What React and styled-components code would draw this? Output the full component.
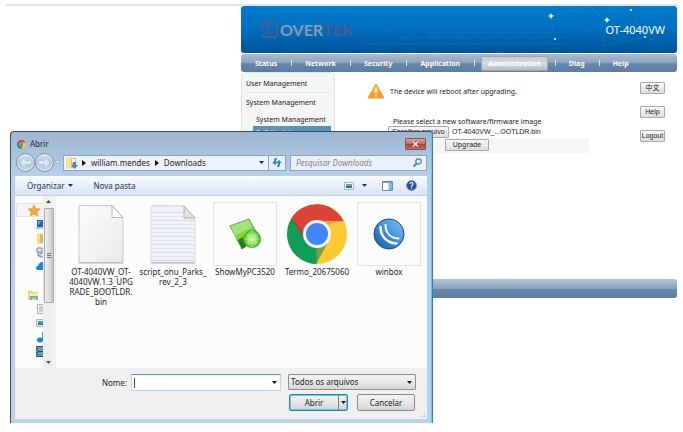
import React from "react";
import styled, { createGlobalStyle } from "styled-components";

const GlobalStyle = createGlobalStyle`
  * { box-sizing: border-box; }
  html, body { margin: 0; background: #fff; }
  button, input, select { font: inherit; color: inherit; margin: 0; }
  ul { list-style: none; margin: 0; padding: 0; }
  svg { display: block; flex: none; }
`;

/* ---------- router page ---------- */

const Page = styled.div`
  position: relative;
  padding: 4px 6px 0;
  min-height: 424px;
  font-family: "Noto Sans", Verdana, sans-serif;
  font-size: 7px;
  line-height: 9px;
  color: #222;
`;

const RouterPage = styled.div`
  border-top: 2px solid #e4e4e4;
  padding-left: 235px;
`;

const Banner = styled.header`
  position: relative;
  display: flex;
  align-items: center;
  justify-content: space-between;
  height: 47px;
  padding: 0 12px 0 20px;
  border-radius: 3px;
  overflow: hidden;
  background: linear-gradient(#007bcd, #0070c2 45%, #00539a);
`;

const Network = styled.svg`
  position: absolute;
  top: 0;
  right: 0;
`;

const Brand = styled.div`
  display: flex;
  align-items: center;
  gap: 2px;
  color: #8f9bab;
  font: 700 16px/18px Lato, sans-serif;
`;

const BrandAccent = styled.span`
  color: #53578e;
`;

const Model = styled.span`
  position: relative;
  color: #fff;
  font: 11px/14px "Noto Sans", sans-serif;
`;

const NavBar = styled.nav`
  display: flex;
  align-items: center;
  gap: 6px;
  height: 18px;
  margin-top: 1px;
  padding-left: 7px;
  border-radius: 3px;
  background: linear-gradient(#a9bdcf, #90a6c0 45%, #6685a8 55%, #5c7fa7);
`;

const NavDivider = styled.span`
  width: 2px;
  height: 6px;
  border-right: 1px solid #dfe7ee;
`;

const NavLink = styled.a`
  padding: 0 6px;
  line-height: 13px;
  font-weight: 700;
  color: #fff;
  text-decoration: none;
  border: 1px solid ${(p) => (p.$active ? "#9aa8b5" : "transparent")};
  border-radius: 2px;
  background: ${(p) => (p.$active ? "linear-gradient(#c9cdd1, #d6d9dc 50%, #b5bdc4)" : "none")};
`;

const Main = styled.main`
  display: flex;
  min-height: 207px;
`;

const SideMenu = styled.aside`
  flex: none;
  width: 94px;
  padding: 3px;
  background: #f4f6f3;
  border: 1px solid #dfe2df;
  border-radius: 5px 5px 0 0;
`;

const MenuGroup = styled.a`
  display: block;
  padding: 0 1px;
  line-height: ${(p) => (p.$first ? 16 : 20)}px;
  color: inherit;
  text-decoration: none;
  border-top: ${(p) => (p.$first ? "none" : "1px solid #e2e7ee")};
`;

const MenuItem = styled.a`
  display: block;
  margin-left: 8px;
  padding-left: 3px;
  line-height: 13px;
  white-space: nowrap;
  text-decoration: none;
  color: ${(p) => (p.$active ? "#fff" : "inherit")};
  background: ${(p) => (p.$active ? "#5e92bd" : "none")};
`;

const Content = styled.section`
  flex: 1;
  padding-top: 12px;
`;

const Warning = styled.p`
  display: flex;
  align-items: center;
  gap: 6px;
  margin: 0 0 18px;
  padding-left: 33px;
`;

const Hint = styled.p`
  margin: 0;
  padding-left: 58px;
  line-height: 9px;
`;

const FileRow = styled.div`
  display: flex;
  align-items: center;
  gap: 3px;
  padding-left: 53px;
  font: 7px/10px "Liberation Sans", Arial, sans-serif;
`;

const UpgradeRow = styled.div`
  display: flex;
  justify-content: center;
  padding: 1px 0 2px 10px;
  margin-right: 1px;
  background: #f6f6f6;
`;

const GreyButton = styled.button`
  min-width: ${(p) => p.$min || 0}px;
  padding: 0;
  line-height: 10px;
  font-family: ${(p) => (p.$arial ? '"Liberation Sans", "Noto Sans CJK SC", sans-serif' : "inherit")};
  white-space: nowrap;
  border: 1px solid #a9a9a9;
  border-radius: 1px;
  background: linear-gradient(#f8f8f8, #dedede);
`;

const Actions = styled.div`
  display: flex;
  flex-direction: column;
  align-items: stretch;
  gap: 12px;
  width: 25px;
  margin: 10px 12px 0 50px;
`;

const FooterBar = styled.footer`
  height: 19px;
  border-radius: 3px;
  background: linear-gradient(#b3c6d2, #8aa3bd 50%, #6487a9 55%, #5b7fa8);
`;

/* ---------- file dialog ---------- */

const Dialog = styled.section`
  position: absolute;
  top: 131px;
  left: 10px;
  width: 423px;
  padding: 0 5px 4px 4px;
  border: 1px solid #3b4a56;
  border-right-color: #357f9d;
  border-bottom: 0;
  border-radius: 4px 4px 0 0;
  background: linear-gradient(#9db7d3, #b7cee9 44px, #b9d1ea);
  box-shadow: inset -1px 0 #4fd0ec;
  font: 8px/10px "Noto Sans", "Segoe UI", sans-serif;
  color: #1e1e1e;
`;

const TitleBar = styled.header`
  display: flex;
  align-items: center;
  gap: 4px;
  padding: 4px 1px 0 2px;
  height: 20px;
`;

const CloseButton = styled.button`
  display: flex;
  align-items: center;
  justify-content: center;
  width: 21px;
  height: 12px;
  margin-left: auto;
  padding: 0;
  border: 1px solid #7c5360;
  border-radius: 1px;
  background: linear-gradient(#dda49b, #c96c60 45%, #b63f30 50%, #cb6354);
`;

const LocationRow = styled.div`
  display: flex;
  align-items: center;
  height: 21px;
  padding-left: 1px;
`;

const RoundButton = styled.button`
  display: flex;
  align-items: center;
  justify-content: center;
  width: 19px;
  height: 19px;
  padding: 0;
  border: 1px solid #7f93a9;
  border-radius: 50%;
  background: linear-gradient(#dae5f0, #b0c2d5 50%, #c7d9ea);
  box-shadow: inset 0 0 0 1px #e2ebf4;
`;

const Address = styled.div`
  display: flex;
  align-items: center;
  flex: 1;
  height: 16px;
  margin: 0 4px 0 2px;
  padding-left: 2px;
  border: 1px solid #8ea2b8;
  background: #edf3fb;
`;

const Crumb = styled.button`
  padding: 0 5px;
  border: 0;
  background: none;
  line-height: 12px;
`;

const AddressEnd = styled.div`
  display: flex;
  align-items: center;
  justify-content: flex-end;
  gap: 4px;
  height: 14px;
  margin-left: auto;
`;

const Refresh = styled.button`
  display: flex;
  align-items: center;
  width: 17px;
  height: 14px;
  padding: 0 3px;
  border: 0;
  border-left: 1px solid #8ea2b8;
  background: #e5eef8;
`;

const SearchBox = styled.label`
  display: flex;
  align-items: center;
  width: 137px;
  height: 16px;
  padding: 0 4px 0 5px;
  border: 1px solid #8ea2b8;
  background: #eaf1fa;
`;

const SearchInput = styled.input`
  flex: 1;
  min-width: 0;
  padding: 0;
  border: 0;
  outline: 0;
  background: none;
  font-style: italic;
  &::placeholder { color: #7c838c; opacity: 1; }
`;

const Toolbar = styled.div`
  display: flex;
  align-items: center;
  height: 20px;
  margin-top: 3px;
  padding: 0 10px 0 12px;
  background: linear-gradient(#fafcfe, #e7eff9 50%, #d9e5f4);
  border-bottom: 1px solid #c2d1e2;
  color: #24364e;
`;

const ToolButton = styled.button`
  display: flex;
  align-items: center;
  gap: ${(p) => p.$gap || 4}px;
  margin-right: ${(p) => p.$after || 0}px;
  padding: 0;
  border: 0;
  background: none;
`;

const Spacer = styled.span`
  flex: 1;
`;

const Browser = styled.div`
  display: flex;
  height: 172px;
  background: #fcfcfc;
`;

const Tree = styled.ul`
  width: 28px;
  padding-top: 7px;
  overflow: hidden;
`;

const TreeItem = styled.li`
  display: flex;
  align-items: center;
  height: 14px;
  margin: ${(p) => (p.$gap ? "15px" : "0")} 0 0 1px;
  padding-left: ${(p) => (p.$child ? 19 : 11)}px;
  border: 1px solid ${(p) => (p.$active ? "#e2e2e2" : "transparent")};
  border-right: 0;
  border-radius: 2px 0 0 2px;
  background: ${(p) => (p.$active ? "#f5f5f5" : "none")};
`;

const ScrollBar = styled.div`
  display: flex;
  flex-direction: column;
  align-items: center;
  width: 11px;
  padding: 4px 0;
  background: #efefef;
`;

const Thumb = styled.div`
  display: flex;
  align-items: center;
  justify-content: center;
  width: 10px;
  height: 95px;
  margin: 5px 0 auto;
  border: 1px solid #a8a8a8;
  border-radius: 1px;
  background: linear-gradient(90deg, #f1f1f1, #dcdcdc 50%, #c4c4c4);
`;

const Files = styled.ul`
  display: flex;
  flex: 1;
  flex-wrap: wrap;
  align-content: flex-start;
  margin-left: 1px;
  padding: 6px 0 0 9px;
  border-left: 1px solid #e5eef8;
`;

const FileItem = styled.li`
  width: 72px;
  padding: 0 4px;
`;

const Preview = styled.div`
  display: flex;
  align-items: center;
  justify-content: center;
  height: 64px;
  border: 1px solid ${(p) => (p.$framed ? "#e3e3e3" : "transparent")};
`;

const FileName = styled.div`
  margin: 1px -4px 0;
  text-align: center;
  white-space: pre-line;
`;

const DialogFooter = styled.footer`
  display: grid;
  grid-template-columns: 112px 1fr 128px;
  gap: 3px 4px;
  padding: 6px 11px 8px 0;
  background: #f0f0f0;
  position: relative;
`;

const FieldLabel = styled.label`
  align-self: center;
  text-align: right;
`;

const Combo = styled.div`
  display: flex;
  align-items: center;
  margin-right: 3px;
  height: 17px;
  padding: 0 3px 0 2px;
  border: 1px solid #b5d5ea;
  border-top-color: #5794bf;
  background: #fff;
`;

const NameInput = styled.input`
  flex: 1;
  min-width: 0;
  padding: 0 0 0 1px;
  border: 0;
  border-left: 1px solid #444;
  outline: 0;
  background: none;
  caret-color: transparent;
`;

const TypeBox = styled.div`
  display: grid;
  align-items: center;
  height: 16px;
  border: 1px solid #8f8f8f;
  border-radius: 1px;
  background: linear-gradient(#f3f3f3, #e8e8e8 50%, #d5d5d5);
  & > * { grid-area: 1 / 1; }
  & > svg { justify-self: end; margin-right: 3px; pointer-events: none; }
`;

const TypeSelect = styled.select`
  appearance: none;
  width: 100%;
  padding: 0 2px;
  border: 0;
  outline: 0;
  background: none;
`;

const Buttons = styled.div`
  grid-column: 3;
  display: flex;
  justify-content: space-between;
  padding: 0 1px;
`;

const Split = styled.div`
  display: flex;
  width: 59px;
  height: 17px;
  border: 1px solid #347fa6;
  border-radius: 2px;
  box-shadow: inset 0 0 0 1px #65cbed;
  background: linear-gradient(#f2f2f2, #e7e7e7 50%, #d3d3d3);
`;

const SplitPart = styled.button`
  display: flex;
  align-items: center;
  justify-content: center;
  flex: ${(p) => (p.$arrow ? "0 0 9px" : "1")};
  padding: 0;
  border: 0;
  border-left: ${(p) => (p.$arrow ? "1px solid #777" : "0")};
  background: none;
`;

const CancelButton = styled.button`
  width: 58px;
  height: 17px;
  padding: 0;
  border: 1px solid #8b8b8b;
  border-radius: 2px;
  background: linear-gradient(#f3f3f3, #e8e8e8 50%, #d5d5d5);
`;

const Grip = styled.svg`
  position: absolute;
  right: 1px;
  bottom: 1px;
`;

/* ---------- drawings ---------- */

const Down = ({ color = "#111" }) => (
  <svg width="5" height="3" viewBox="0 0 5 3"><path d="M0 0h5L2.5 3z" fill={color} /></svg>
);

const Right = () => (
  <svg width="4" height="6" viewBox="0 0 4 6"><path d="M0 0l4 3-4 3z" fill="#111" /></svg>
);

const ChromeIcon = ({ size }) => (
  <svg width={size} height={size} viewBox="0 0 60 60">
    <circle cx="30" cy="30" r="30" fill="#fcc934" />
    <path d="M4.5 14.3A30 30 0 0 1 56.5 17H30z" fill="#db4437" />
    <path d="M4.5 14.3A30 30 0 0 0 29 60l12-22-11-8-12-1z" fill="#0f9d58" />
    <path d="M4.5 14.3L18 36a13 13 0 0 1 12-19h26.5A30 30 0 0 0 4.5 14.3z" fill="#db4437" />
    <path d="M30 60L41 37l-12 6z" fill="#e8ae2c" opacity=".4" />
    <path d="M4.5 14.3L18 36v-8z" fill="#98352d" opacity=".5" />
    <path d="M30 17h26.5l-17 4z" fill="#b38524" opacity=".4" />
    <circle cx="30" cy="30" r="14" fill="#f4f4f4" />
    <circle cx="30" cy="30" r="11" fill="#4285f4" />
  </svg>
);

const BlankFile = () => (
  <svg width="46" height="60" viewBox="0 0 46 60">
    <defs>
      <linearGradient id="paper" x2="1" y2="1"><stop stopColor="#fcfcfc" /><stop offset="1" stopColor="#e9e9e9" /></linearGradient>
    </defs>
    <path d="M1 1.500h33l11 12v45H1z" fill="url(#paper)" stroke="#c9c9c9" />
    <path d="M34 1.500v12h11z" fill="#fff" stroke="#b4b4b4" />
    <path d="M1 59h44" stroke="#b4b4b4" />
  </svg>
);

const TextFile = () => (
  <svg width="46" height="60" viewBox="0 0 46 60">
    <path d="M1 2h33l11 12v44.500H1z" fill="#f0f2f7" stroke="#d5d8dd" />
    {[8, 12, 16, 20, 24, 28, 32, 36, 40, 44, 48, 52, 56].map((y) => (
      <path key={y} d={`M2 ${y}.5h${y < 14 ? 32 : 42}`} stroke={y % 8 ? "#dfe5f0" : "#d0ddee"} />
    ))}
    <path d="M2 1.500h32" stroke="#c0c0c0" strokeDasharray="1 2" />
    <path d="M34 2v12h11z" fill="#e2e2e2" stroke="#b0b0b0" />
    <path d="M1 59h44" stroke="#aaa" />
  </svg>
);

const ShowMyPcIcon = () => (
  <svg width="32" height="32" viewBox="0 0 32 32">
    <defs>
      <linearGradient id="panel" y2="1" x2=".4"><stop stopColor="#c6f2a6" /><stop offset=".6" stopColor="#6fcf48" /><stop offset="1" stopColor="#2c8f22" /></linearGradient>
      <radialGradient id="globe"><stop stopColor="#d8ffbd" /><stop offset=".6" stopColor="#86e052" /><stop offset="1" stopColor="#3cb02a" /></radialGradient>
    </defs>
    <path d="M1 8L20 1l10 18-17 12z" fill="url(#panel)" stroke="#55aa44" />
    <path d="M2 9l17-7 4 7-17 9z" fill="#a3e07e" />
    <path d="M6 18l11-6 4 7-10 6z" fill="#7bdc2e" />
    <path d="M9 22l4 9 4-3-3-9z" fill="#237a1e" />
    <circle cx="23" cy="21" r="8.500" fill="url(#globe)" stroke="#43b32e" />
    <path d="M15 21h16M23 13v16M17 17h12M17 25h12" stroke="#c7f7aa" strokeWidth=".5" />
    <ellipse cx="23" cy="21" rx="4" ry="8" fill="none" stroke="#c7f7aa" strokeWidth=".5" />
  </svg>
);

const WinboxIcon = () => (
  <svg width="32" height="32" viewBox="0 0 32 32">
    <defs><linearGradient id="ball" x1="1" x2="0" y2="1"><stop stopColor="#7ec4fb" /><stop offset=".5" stopColor="#3f90dc" /><stop offset="1" stopColor="#10569f" /></linearGradient></defs>
    <circle cx="16" cy="16" r="15" fill="url(#ball)" stroke="#17477b" />
    <g fill="none" stroke="#fff" strokeLinecap="round">
      <path d="M12.500 7c0 8 5 13 13 13.500" strokeWidth="2" />
      <path d="M7.500 9c0 9 6 16 16 16.500" strokeWidth="2.400" />
    </g>
  </svg>
);

const Star = () => (
  <svg width="12" height="11" viewBox="0 0 12 11"><path d="M6 0l1.700 3.600 4.300.5-3.200 2.800.9 4.100L6 9l-3.700 2 .9-4.100L0 4.100l4.300-.5z" fill="#ffa832" stroke="#e8872b" strokeWidth=".6" /></svg>
);
const DesktopGlyph = () => (
  <svg width="9" height="9" viewBox="0 0 9 9"><path d="M1 0h8v7H1z" fill="#2464b4" /><path d="M2 1h4L2 5z" fill="#74a8df" /><path d="M0 7h9v2H0z" fill="#bdc8d3" /></svg>
);
const FolderGlyph = () => (
  <svg width="10" height="11" viewBox="0 0 10 11"><path d="M1 1l4-1v11l-4-1z" fill="#f4dc83" /><path d="M4 1h5v9H4z" fill="#dfbc58" /><path d="M7 5h3v5H7z" fill="#36a0d8" /></svg>
);
const NetworkGlyph = () => (
  <svg width="9" height="11" viewBox="0 0 9 11"><path d="M1 1h5v4H1zM4 6h4v4H4zM2 5v4h2" fill="#e4e9ed" stroke="#7b8790" /></svg>
);
const CloudGlyph = () => (
  <svg width="12" height="8" viewBox="0 0 12 8"><path d="M2 8a2 2 0 0 1 0-4 5 5 0 0 1 8-3v7z" fill="#1686e0" /></svg>
);
const LibraryGlyph = () => (
  <svg width="11" height="11" viewBox="0 0 11 11"><path d="M0 1h4l1 1h5v8H0z" fill="#efd169" /><path d="M1 3h9v3H1z" fill="#f9eaa7" /><path d="M2 10V6h8v4H8V8H4v2z" fill="#5db4d8" /></svg>
);
const DocumentGlyph = () => (
  <svg width="8" height="10" viewBox="0 0 8 10"><path d="M1.500.5h7v9h-7z" fill="#f7f9fb" stroke="#a5b1bc" /><path d="M3 3h4M3 5h4M3 7h4" stroke="#88a7cc" /></svg>
);
const PictureGlyph = () => (
  <svg width="9" height="8" viewBox="0 0 9 8"><path d="M.5.5h9v7h-9z" fill="#eef4f7" stroke="#a7b7c0" /><path d="M2 2h6v4H2z" fill="#3aa2cf" /><path d="M2 6V4l3 1 3-1v2z" fill="#267b4c" /></svg>
);
const MusicGlyph = () => (
  <svg width="8" height="11" viewBox="0 0 8 11"><path d="M6 0h2v8H6z" fill="#2fa1e2" /><ellipse cx="4" cy="8" rx="3" ry="2.500" fill="#1785d2" /></svg>
);
const VideoGlyph = () => (
  <svg width="8" height="11" viewBox="0 0 8 11"><path d="M0 0h8v11H0z" fill="#34495a" /><path d="M2 1h5v4H2zM2 6h5v4H2z" fill="#5f9fbb" /><path d="M1 1v9" stroke="#ccc" strokeDasharray="1 1" /></svg>
);

const navItems = ["Status", "Network", "Security", "Application", "Administration", "Diag", "Help"];

const tree = [
  { icon: <Star />, active: true },
  { icon: <DesktopGlyph />, child: true },
  { icon: <FolderGlyph />, child: true },
  { icon: <NetworkGlyph />, child: true },
  { icon: <CloudGlyph />, child: true },
  { icon: <LibraryGlyph />, gap: true },
  { icon: <DocumentGlyph />, child: true },
  { icon: <PictureGlyph />, child: true },
  { icon: <MusicGlyph />, child: true },
  { icon: <VideoGlyph />, child: true },
];

const files = [
  { name: "OT-4040VW_OT-\n4040VW.1.3_UPG\nRADE_BOOTLDR.\nbin", icon: <BlankFile /> },
  { name: "script_onu_Parks_\nrev_2_3", icon: <TextFile /> },
  { name: "ShowMyPC3520", icon: <ShowMyPcIcon />, framed: true },
  { name: "Termo_20675060", icon: <ChromeIcon size={60} /> },
  { name: "winbox", icon: <WinboxIcon />, framed: true },
];

function Header() {
  return (
    <Banner>
      <Network width="330" height="47" viewBox="0 0 330 47" fill="none" stroke="#65bfe9" strokeOpacity=".2" strokeWidth=".6">
        <path d="M0 47l50-28M30 47l50-28M60 47l45-28M90 47l40-28M120 47l38-28M150 47l30-28M175 47l26-28M20 38h200M50 32h170M80 27h130M195 0l9 10 38-10 18 15 24-11 45 20M204 10l4 23-15 7M260 15l-28 14M260 15l-5 25 43-9-14-27M298 31l16 6M242 0l18 15" />
        <g fill="#fff" stroke="none">
          <path d="M204 7l1 2 2 1-2 1-1 2-1-2-2-1 2-1zM260 11l1 2 2 1-2 1-1 2-1-2-2-1 2-1z" />
          <circle cx="284" cy="4" r="1" /><circle cx="298" cy="31" r="1" /><circle cx="208" cy="33" r="1" />
        </g>
      </Network>
      <Brand>
        <svg width="17" height="17" viewBox="0 0 17 17" fill="none" stroke="#53578e" strokeWidth="2">
          <path d="M1 10V3l2-2h11l2 2v11l-2 2H3l-2-2v-1" />
          <path d="M4 6h4v6M5 12h7" strokeWidth="1.500" />
        </svg>
        <span>OVER<BrandAccent>TEK</BrandAccent></span>
      </Brand>
      <Model>OT-4040VW</Model>
    </Banner>
  );
}

function OpenDialog() {
  return (
    <Dialog role="dialog" aria-label="Abrir">
      <TitleBar>
        <ChromeIcon size={9} />
        <span>Abrir</span>
        <CloseButton aria-label="Fechar">
          <svg width="7" height="6" viewBox="0 0 7 6"><path d="M1 .5l5 5M6 .5l-5 5" stroke="#6b3a3c" strokeWidth="2.600" /><path d="M1 .5l5 5M6 .5l-5 5" stroke="#fff" strokeWidth="1.500" /></svg>
        </CloseButton>
      </TitleBar>
      <LocationRow>
        <RoundButton aria-label="Voltar">
          <svg width="11" height="9" viewBox="0 0 11 9"><path d="M0 4.500L5 0v3h6v3H5v3z" fill="#dce7f1" /></svg>
        </RoundButton>
        <RoundButton aria-label="Avançar">
          <svg width="11" height="9" viewBox="0 0 11 9"><path d="M11 4.500L6 0v3H0v3h6v3z" fill="#dce7f1" /></svg>
        </RoundButton>
        <svg width="7" height="5" viewBox="0 0 7 5"><path d="M1 .5h5L3.500 4z" fill="#dce8f4" stroke="#8fa6bd" strokeWidth=".6" /></svg>
        <Address>
          <svg width="16" height="12" viewBox="0 0 16 12"><path d="M0 1l5-1v12l-5-1z" fill="#f7e396" /><path d="M5 1h5v10H5z" fill="#e3c465" /><path d="M6 2h3v4H6z" fill="#fff" /><path d="M7 5h3v3h2l-3.500 4L5 8h2z" fill="#2b8fd2" /></svg>
          <Right />
          <Crumb>william.mendes</Crumb>
          <Right />
          <Crumb>Downloads</Crumb>
          <AddressEnd>
            <Down color="#102a60" />
            <Refresh aria-label="Atualizar">
              <svg width="10" height="9" viewBox="0 0 10 9" fill="#2e83c5"><path d="M3 0h2v1L4 2v2h2L3 7 0 4h2V2zM7 2l3 3H8v2L7 9H5V8l1-1V5H4z" /></svg>
            </Refresh>
          </AddressEnd>
        </Address>
        <SearchBox>
          <SearchInput aria-label="Pesquisar Downloads" placeholder="Pesquisar Downloads" />
          <svg width="9" height="9" viewBox="0 0 9 9" fill="none" stroke="#3c7fbd"><circle cx="5.500" cy="3.500" r="2.700" strokeWidth="1.200" /><path d="M3.500 5.500L.5 8.500" strokeWidth="1.800" /></svg>
        </SearchBox>
      </LocationRow>
      <Toolbar>
        <ToolButton $after={20}>Organizar <Down color="#24364e" /></ToolButton>
        <ToolButton>Nova pasta</ToolButton>
        <Spacer />
        <ToolButton $gap={8} $after={15} aria-label="Exibição">
          <svg width="10" height="8" viewBox="0 0 10 8"><path d="M.5.5h9v7h-9z" fill="#fff" stroke="#9eb7c9" /><path d="M2 2h6v2H2z" fill="#56a6d1" /><path d="M2 4h6v2H2z" fill="#396f60" /></svg>
          <Down color="#24364e" />
        </ToolButton>
        <ToolButton $after={13} aria-label="Painel de visualização">
          <svg width="11" height="10" viewBox="0 0 11 10"><path d="M.5.5h10v9H.5z" fill="#fff" stroke="#668aaa" /><path d="M1 1h9v1H1z" fill="#7da5c3" /><path d="M7 2h3v7H7z" fill="#79c3da" stroke="#5d9fbc" strokeWidth=".5" /></svg>
        </ToolButton>
        <ToolButton aria-label="Ajuda">
          <svg width="11" height="11" viewBox="0 0 11 11"><circle cx="5.500" cy="5.500" r="5" fill="#2650a4" stroke="#8d9ab0" /><path d="M4 4q0-1.500 1.500-1.500T7 4q0 1-1.500 2v.7M5.500 7.500v1.300" fill="none" stroke="#fff" strokeWidth="1.200" /></svg>
        </ToolButton>
      </Toolbar>
      <Browser>
        <Tree>
          {tree.map((t, i) => (
            <TreeItem key={i} $active={t.active} $child={t.child} $gap={t.gap}>{t.icon}</TreeItem>
          ))}
        </Tree>
        <ScrollBar>
          <svg width="5" height="3" viewBox="0 0 5 3"><path d="M0 3h5L2.500 0z" fill="#444" /></svg>
          <Thumb><svg width="4" height="6" viewBox="0 0 4 6"><path d="M0 .5h4M0 2.500h4M0 4.500h4" stroke="#777" /></svg></Thumb>
          <Down color="#555" />
        </ScrollBar>
        <Files>
          {files.map((f) => (
            <FileItem key={f.name}>
              <Preview $framed={f.framed}>{f.icon}</Preview>
              <FileName>{f.name}</FileName>
            </FileItem>
          ))}
        </Files>
      </Browser>
      <DialogFooter>
        <FieldLabel htmlFor="file-name">Nome:</FieldLabel>
        <Combo>
          <NameInput id="file-name" />
          <Down />
        </Combo>
        <TypeBox>
          <TypeSelect aria-label="Tipo de arquivo"><option>Todos os arquivos</option></TypeSelect>
          <Down />
        </TypeBox>
        <Buttons>
          <Split>
            <SplitPart>Abrir</SplitPart>
            <SplitPart $arrow aria-label="Mais opções"><Down /></SplitPart>
          </Split>
          <CancelButton>Cancelar</CancelButton>
        </Buttons>
        <Grip width="6" height="6" viewBox="0 0 6 6" fill="#c4c4c4"><path d="M4 0h1v1H4zM2 2h1v1H2zM4 2h1v1H4zM0 4h1v1H0zM2 4h1v1H2zM4 4h1v1H4z" /></Grip>
      </DialogFooter>
    </Dialog>
  );
}

export default function App() {
  return (
    <Page>
      <GlobalStyle />
      <RouterPage>
        <Header />
        <NavBar>
          {navItems.map((n, i) => (
            <React.Fragment key={n}>
              {i > 0 && <NavDivider />}
              <NavLink href="#" $active={n === "Administration"}>{n}</NavLink>
            </React.Fragment>
          ))}
        </NavBar>
        <Main>
          <SideMenu>
            <MenuGroup href="#" $first>User Management</MenuGroup>
            <MenuGroup href="#">System Management</MenuGroup>
            <MenuItem href="#">System Management</MenuItem>
            <MenuItem href="#" $active>Soft Update</MenuItem>
          </SideMenu>
          <Content>
            <Warning>
              <svg width="16" height="15" viewBox="0 0 16 15"><path d="M8 1l7 12.500H1z" fill="#ff9d25" stroke="#f79a24" strokeWidth="2" strokeLinejoin="round" /><path d="M8 1l3 5.500L4 9z" fill="#ffc35d" /><path d="M8 4v5M8 10.500v2" stroke="#fff" strokeWidth="1.600" /></svg>
              The device will reboot after upgrading.
            </Warning>
            <Hint>Please select a new software/firmware image</Hint>
            <FileRow>
              <GreyButton $arial $min={61}>Escolher arquivo</GreyButton>
              <span>OT-4040VW_...OOTLDR.bin</span>
            </FileRow>
            <UpgradeRow><GreyButton $min={44}>Upgrade</GreyButton></UpgradeRow>
          </Content>
          <Actions>
            <GreyButton $arial>中文</GreyButton>
            <GreyButton $arial>Help</GreyButton>
            <GreyButton $arial>Logout</GreyButton>
          </Actions>
        </Main>
        <FooterBar />
      </RouterPage>
      <OpenDialog />
    </Page>
  );
}
